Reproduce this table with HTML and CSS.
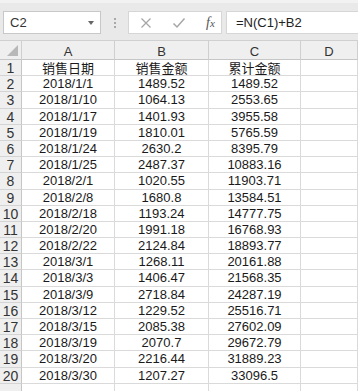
FILE: index.html
```html
<!DOCTYPE html>
<html>
<head>
<meta charset="utf-8">
<link rel="stylesheet" href="styles.css">
</head>
<body>
<div class="toolbar">
  <div class="namebox"><span class="name">C2</span><span class="caret"></span></div>
  <div class="grip"><span></span><span></span><span></span></div>
  <div class="btns">
    <svg class="ico" width="12" height="12" viewBox="0 0 12 12"><path d="M1.5 1.5 L10.5 10.5 M10.5 1.5 L1.5 10.5" stroke="#a6a6a6" stroke-width="1.3" fill="none"/></svg>
    <svg class="ico" width="14" height="12" viewBox="0 0 14 12"><path d="M1.5 6.5 L5 10 L12.5 1.5" stroke="#a6a6a6" stroke-width="1.5" fill="none"/></svg>
    <span class="fx">f<i>x</i></span>
  </div>
  <div class="formula">=N(C1)+B2</div>
</div>
<div class="sheet">
  <div class="hd corner"><span class="tri"></span></div>
  <div class="hd">A</div><div class="hd">B</div><div class="hd">C</div><div class="hd">D</div>

  <div class="rh">1</div><div class="c cjk">销售日期</div><div class="c cjk">销售金额</div><div class="c cjk">累计金额</div><div class="c"></div>
  <div class="rh">2</div><div class="c">2018/1/1</div><div class="c">1489.52</div><div class="c">1489.52</div><div class="c"></div>
  <div class="rh">3</div><div class="c">2018/1/10</div><div class="c">1064.13</div><div class="c">2553.65</div><div class="c"></div>
  <div class="rh">4</div><div class="c">2018/1/17</div><div class="c">1401.93</div><div class="c">3955.58</div><div class="c"></div>
  <div class="rh">5</div><div class="c">2018/1/19</div><div class="c">1810.01</div><div class="c">5765.59</div><div class="c"></div>
  <div class="rh">6</div><div class="c">2018/1/24</div><div class="c">2630.2</div><div class="c">8395.79</div><div class="c"></div>
  <div class="rh">7</div><div class="c">2018/1/25</div><div class="c">2487.37</div><div class="c">10883.16</div><div class="c"></div>
  <div class="rh">8</div><div class="c">2018/2/1</div><div class="c">1020.55</div><div class="c">11903.71</div><div class="c"></div>
  <div class="rh">9</div><div class="c">2018/2/8</div><div class="c">1680.8</div><div class="c">13584.51</div><div class="c"></div>
  <div class="rh">10</div><div class="c">2018/2/18</div><div class="c">1193.24</div><div class="c">14777.75</div><div class="c"></div>
  <div class="rh">11</div><div class="c">2018/2/20</div><div class="c">1991.18</div><div class="c">16768.93</div><div class="c"></div>
  <div class="rh">12</div><div class="c">2018/2/22</div><div class="c">2124.84</div><div class="c">18893.77</div><div class="c"></div>
  <div class="rh">13</div><div class="c">2018/3/1</div><div class="c">1268.11</div><div class="c">20161.88</div><div class="c"></div>
  <div class="rh">14</div><div class="c">2018/3/3</div><div class="c">1406.47</div><div class="c">21568.35</div><div class="c"></div>
  <div class="rh">15</div><div class="c">2018/3/9</div><div class="c">2718.84</div><div class="c">24287.19</div><div class="c"></div>
  <div class="rh">16</div><div class="c">2018/3/12</div><div class="c">1229.52</div><div class="c">25516.71</div><div class="c"></div>
  <div class="rh">17</div><div class="c">2018/3/15</div><div class="c">2085.38</div><div class="c">27602.09</div><div class="c"></div>
  <div class="rh">18</div><div class="c">2018/3/19</div><div class="c">2070.7</div><div class="c">29672.79</div><div class="c"></div>
  <div class="rh">19</div><div class="c">2018/3/20</div><div class="c">2216.44</div><div class="c">31889.23</div><div class="c"></div>
  <div class="rh">20</div><div class="c">2018/3/30</div><div class="c">1207.27</div><div class="c">33096.5</div><div class="c"></div>
  <div class="rh"></div><div class="c"></div><div class="c"></div><div class="c"></div><div class="c"></div>
</div>
</body>
</html>
```
FILE: styles.css
```css
* { box-sizing: border-box; }
html, body { margin: 0; padding: 0; }
body {
  width: 358px;
  height: 391px;
  overflow: hidden;
  background: #fff;
  font-family: "Liberation Sans", "Noto Sans CJK SC", sans-serif;
  font-size: 13px;
  color: #222;
}
.toolbar {
  height: 41px;
  background: #e9e9e9;
  border-top: 3px solid #f2f2f2;
  border-bottom: 1px solid #d0d0d0;
  display: flex;
  align-items: flex-start;
  padding-top: 8px;
}
.namebox {
  margin-left: 3px;
  width: 98px;
  height: 23px;
  background: #fff;
  border: 1px solid #c8c8c8;
  display: flex;
  align-items: center;
  justify-content: space-between;
  padding: 0 6px 0 6px;
}
.name { color: #333; font-size: 13px; }
.caret {
  width: 0; height: 0;
  border-left: 3.5px solid transparent;
  border-right: 3.5px solid transparent;
  border-top: 4px solid #666;
}
.grip {
  width: 27px;
  height: 23px;
  display: flex;
  flex-direction: column;
  align-items: center;
  justify-content: center;
  gap: 2px;
}
.grip span { width: 2px; height: 2px; background: #a8a8a8; }
.btns {
  width: 94px;
  height: 23px;
  background: #fff;
  border: 1px solid #d6d6d6;
  display: flex;
  align-items: center;
  padding-left: 11px;
  gap: 20px;
}
.fx {
  font-family: "Liberation Serif", serif;
  font-style: italic;
  font-size: 14px;
  color: #555;
  margin-left: 0;
}
.fx i { font-size: 11px; }
.formula {
  margin-left: 4px;
  flex: 1;
  height: 23px;
  background: #fff;
  border: 1px solid #d6d6d6;
  border-right: none;
  padding-left: 9px;
  line-height: 21px;
  color: #222;
  font-size: 13px;
}
.sheet {
  display: grid;
  grid-template-columns: 22px 93px 94px 92px 1fr;
  grid-template-rows: 19px;
  grid-auto-rows: 16.2px;
}
.hd {
  background: #efefef;
  border-right: 1px solid #cfcfcf;
  border-bottom: 1px solid #c6c6c6;
  text-align: center;
  line-height: 21px;
  color: #333;
}
.corner { position: relative; }
.tri {
  position: absolute;
  right: 3px;
  bottom: 3px;
  width: 0; height: 0;
  border-left: 11px solid transparent;
  border-bottom: 11px solid #b8b8b8;
}
.rh {
  background: #efefef;
  border-right: 1px solid #c6c6c6;
  border-bottom: 1px solid #d4d4d4;
  text-align: center;
  line-height: 16px;
  color: #333;
  font-size: 14px;
}
.c {
  border-right: 1px solid #dadada;
  border-bottom: 1px solid #dadada;
  text-align: center;
  line-height: 16px;
  white-space: nowrap;
  color: #1a1a1a;
}
.cjk { font-family: "Noto Sans CJK SC", sans-serif; font-size: 13px; line-height: 16px; }
```
